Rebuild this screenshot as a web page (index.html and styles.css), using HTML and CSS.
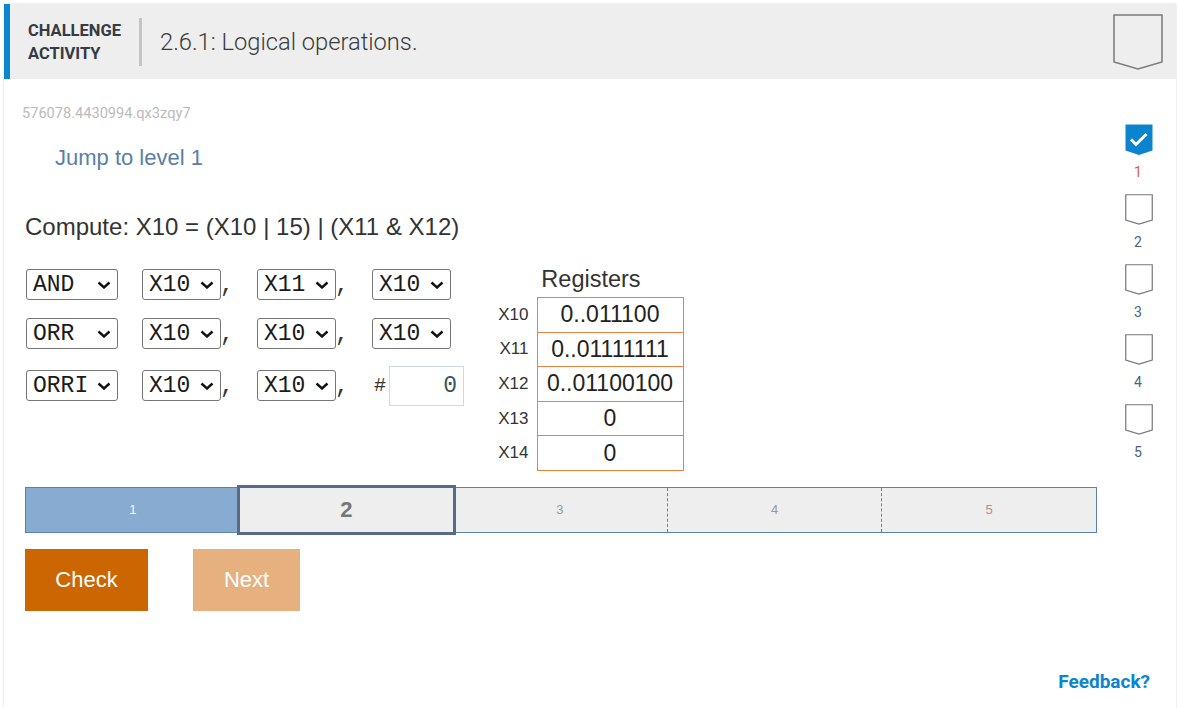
FILE: index.html
```html
<!DOCTYPE html>
<html lang="en">
<head>
<meta charset="utf-8">
<title>2.6.1: Logical operations.</title>
<link rel="stylesheet" href="styles.css">
</head>
<body>
<div class="card">
  <div class="header">
    <div class="kicker">CHALLENGE<br>ACTIVITY</div>
    <div class="divider"></div>
    <div class="title">2.6.1: Logical operations.</div>
    <svg class="badge" width="50" height="57" viewBox="0 0 50 57"><path d="M1 1 H49 V48 L25 55 L1 48 Z" fill="none" stroke="#7a7a7a" stroke-width="1.5"/></svg>
  </div>
  <div class="body">
    <div class="main">
      <div class="sid">576078.4430994.qx3zqy7</div>
      <div class="jump">Jump to level 1</div>
      <div class="compute">Compute: X10 = (X10 | 15) | (X11 &amp; X12)</div>
      <div class="exercise">
        <div class="code">
          <div class="row">
            <select class="op"><option>AND</option></select>
            <select class="reg"><option>X10</option></select><span class="comma">,</span>
            <select class="reg"><option>X11</option></select><span class="comma">,</span>
            <select class="reg"><option>X10</option></select>
          </div>
          <div class="row">
            <select class="op"><option>ORR</option></select>
            <select class="reg"><option>X10</option></select><span class="comma">,</span>
            <select class="reg"><option>X10</option></select><span class="comma">,</span>
            <select class="reg"><option>X10</option></select>
          </div>
          <div class="row row-imm">
            <select class="op"><option>ORRI</option></select>
            <select class="reg"><option>X10</option></select><span class="comma">,</span>
            <select class="reg"><option>X10</option></select><span class="comma">,</span>
            <span class="hash">#</span><input class="imm" type="text" value="0">
          </div>
        </div>
        <div class="registers">
          <div class="reg-title">Registers</div>
          <table class="reg-table">
            <tr><th>X10</th><td>0..011100</td></tr>
            <tr><th>X11</th><td>0..01111111</td></tr>
            <tr><th>X12</th><td>0..01100100</td></tr>
            <tr><th>X13</th><td>0</td></tr>
            <tr><th>X14</th><td>0</td></tr>
          </table>
        </div>
      </div>
      <div class="levels-bar">
        <div class="seg done">1</div>
        <div class="seg current">2</div>
        <div class="seg">3</div>
        <div class="seg dashed">4</div>
        <div class="seg dashed">5</div>
      </div>
      <div class="buttons">
        <button class="btn check">Check</button>
        <button class="btn next">Next</button>
      </div>
    </div>
    <div class="sidebar">
      <div class="level">
        <svg width="28" height="31" viewBox="0 0 28 31"><path d="M0.5 0.5 H27.5 V26.5 L14 31 L0.5 26.5 Z" fill="#0b84cf"/><path d="M6 15.5 L11 20.5 L21.5 10" fill="none" stroke="#fff" stroke-width="3"/></svg>
        <div class="num num-done">1</div>
      </div>
      <div class="level">
        <svg width="28" height="31" viewBox="0 0 28 31"><path d="M0.75 0.75 H27.25 V26 L14 30 L0.75 26 Z" fill="none" stroke="#777" stroke-width="1.2"/></svg>
        <div class="num">2</div>
      </div>
      <div class="level">
        <svg width="28" height="31" viewBox="0 0 28 31"><path d="M0.75 0.75 H27.25 V26 L14 30 L0.75 26 Z" fill="none" stroke="#777" stroke-width="1.2"/></svg>
        <div class="num">3</div>
      </div>
      <div class="level">
        <svg width="28" height="31" viewBox="0 0 28 31"><path d="M0.75 0.75 H27.25 V26 L14 30 L0.75 26 Z" fill="none" stroke="#777" stroke-width="1.2"/></svg>
        <div class="num">4</div>
      </div>
      <div class="level">
        <svg width="28" height="31" viewBox="0 0 28 31"><path d="M0.75 0.75 H27.25 V26 L14 30 L0.75 26 Z" fill="none" stroke="#777" stroke-width="1.2"/></svg>
        <div class="num">5</div>
      </div>
    </div>
  </div>
  <div class="footer"><a class="feedback" href="#">Feedback?</a></div>
</div>
</body>
</html>
```
FILE: styles.css
```css
html, body {
  margin: 0;
  padding: 0;
  background: #fff;
}
body {
  padding: 4px 0 0 4px;
  font-family: "Liberation Sans", Arial, sans-serif;
  color: #333;
  overflow: hidden;
}
.card {
  width: 1172px;
  min-height: 730px;
  background: #fff;
  box-shadow: 0 0 2px rgba(0, 0, 0, 0.18);
}
.header {
  display: flex;
  align-items: center;
  height: 75px;
  background: #eeeeee;
  border-left: 6px solid #0b86d0;
  box-sizing: border-box;
}
.kicker {
  padding-left: 18px;
  font-family: Roboto, sans-serif;
  font-weight: 700;
  font-size: 16.5px;
  line-height: 23px;
  color: #353b42;
  width: 93px;
}
.divider {
  width: 3px;
  height: 48px;
  background: #c4c4c4;
  margin-left: 18px;
}
.title {
  margin-left: 18px;
  font-family: Roboto, sans-serif;
  font-weight: 300;
  font-size: 23.7px;
  color: #3a3a3a;
}
.badge {
  margin-left: auto;
  margin-right: 13px;
  align-self: flex-start;
  margin-top: 10px;
}
.body {
  display: flex;
}
.main {
  width: 1096px;
  box-sizing: border-box;
  padding-left: 21px;
}
.sid {
  margin: 25px 0 0 -3px;
  font-family: Roboto, sans-serif;
  font-size: 14.6px;
  line-height: 18px;
  color: #bbbbbb;
}
.jump {
  margin: 23px 0 0 30px;
  font-size: 22px;
  line-height: 25px;
  color: #5a7fa6;
}
.compute {
  margin-top: 43px;
  font-size: 24px;
  line-height: 27px;
  color: #333;
}
.exercise {
  display: flex;
  margin-top: 26px;
}
.code {
  padding-top: 3px;
  padding-left: 1px;
}
.row {
  display: flex;
  align-items: center;
  height: 31px;
  margin-bottom: 18px;
}
.row-imm {
  height: 41px;
  margin-top: -2px;
}
select {
  -webkit-appearance: none;
  appearance: none;
  box-sizing: border-box;
  font-family: "Liberation Mono", "Courier New", monospace;
  font-size: 23px;
  height: 31px;
  padding: 0 0 0 6px;
  border: 1px solid #767676;
  border-radius: 3px;
  color: #1a1a1a;
  background: #fff url("data:image/svg+xml,%3Csvg xmlns='http://www.w3.org/2000/svg' width='14' height='8' viewBox='0 0 14 8'%3E%3Cpath d='M1.5 1.5 L7 6.5 L12.5 1.5' fill='none' stroke='%23111' stroke-width='2.4'/%3E%3C/svg%3E") no-repeat right 6px center / 14px 8px;
}
select.op {
  width: 92px;
  margin-right: 24px;
}
select.reg {
  width: 79px;
}
.comma {
  display: inline-block;
  width: 37px;
  font-family: "Liberation Mono", "Courier New", monospace;
  font-size: 23px;
  line-height: 31px;
  position: relative;
  top: 2px;
  margin-left: -1px;
}
.hash {
  display: inline-block;
  width: 15px;
  margin-left: 2px;
  font-family: "Liberation Mono", "Courier New", monospace;
  font-size: 20px;
  color: #333;
}
.imm {
  width: 75px;
  height: 40px;
  box-sizing: border-box;
  border: 1px solid #d0d9df;
  padding: 0 6px 0 0;
  text-align: right;
  font-family: "Liberation Mono", "Courier New", monospace;
  font-size: 23px;
  color: #3a5560;
  outline: none;
}
.registers {
  margin-left: 33px;
  width: 188px;
}
.reg-title {
  text-align: center;
  font-size: 23.5px;
  line-height: 26px;
  color: #333;
  margin-bottom: 5px;
}
.reg-table {
  border-collapse: collapse;
}
.reg-table th {
  width: 40px;
  padding: 0 8px 0 0;
  text-align: right;
  font-weight: normal;
  font-size: 17px;
  color: #333;
  box-sizing: border-box;
}
.reg-table td {
  width: 146px;
  height: 34.6px;
  padding: 0;
  box-sizing: border-box;
  border: 1px solid #e8843f;
  text-align: center;
  font-size: 23px;
  color: #222;
}
.levels-bar {
  display: flex;
  width: 1072px;
  height: 46px;
  box-sizing: border-box;
  border: 1px solid #5b82ab;
  margin-top: 16px;
  background: #eeeeee;
}
.seg {
  flex: 1;
  display: flex;
  align-items: center;
  justify-content: center;
  font-size: 13px;
  color: #999;
}
.seg.done {
  background: #87abd1;
  color: #f4f6fa;
}
.seg.current {
  outline: 3px solid #566a8a;
  position: relative;
  z-index: 1;
  font-size: 22px;
  font-weight: 700;
  color: #777;
}
.seg.dashed {
  border-left: 1px dashed #5b82ab;
}
.buttons {
  display: flex;
  margin-top: 16px;
}
.btn {
  height: 62px;
  border: none;
  border-radius: 0;
  font-family: "Liberation Sans", Arial, sans-serif;
  font-size: 22px;
  color: #fff;
  padding: 0;
}
.check {
  width: 123px;
  background: #cc6600;
}
.next {
  width: 107px;
  margin-left: 45px;
  background: #e6b07f;
}
.sidebar {
  width: 76px;
  padding-top: 45px;
  display: flex;
  flex-direction: column;
  align-items: center;
}
.level {
  display: flex;
  flex-direction: column;
  align-items: center;
  height: 70px;
}
.level svg {
  display: block;
  margin-left: 1px;
}
.num {
  margin-top: 9px;
  font-family: Roboto, sans-serif;
  font-size: 14px;
  line-height: 17px;
  color: #4a5f80;
}
.num-done {
  color: #d2603a;
}
.footer {
  display: flex;
  justify-content: flex-end;
  padding: 60px 26px 0 0;
}
.feedback {
  font-family: Roboto, sans-serif;
  font-weight: 700;
  font-size: 19px;
  line-height: 21px;
  color: #0d84ce;
  text-decoration: none;
}
```
